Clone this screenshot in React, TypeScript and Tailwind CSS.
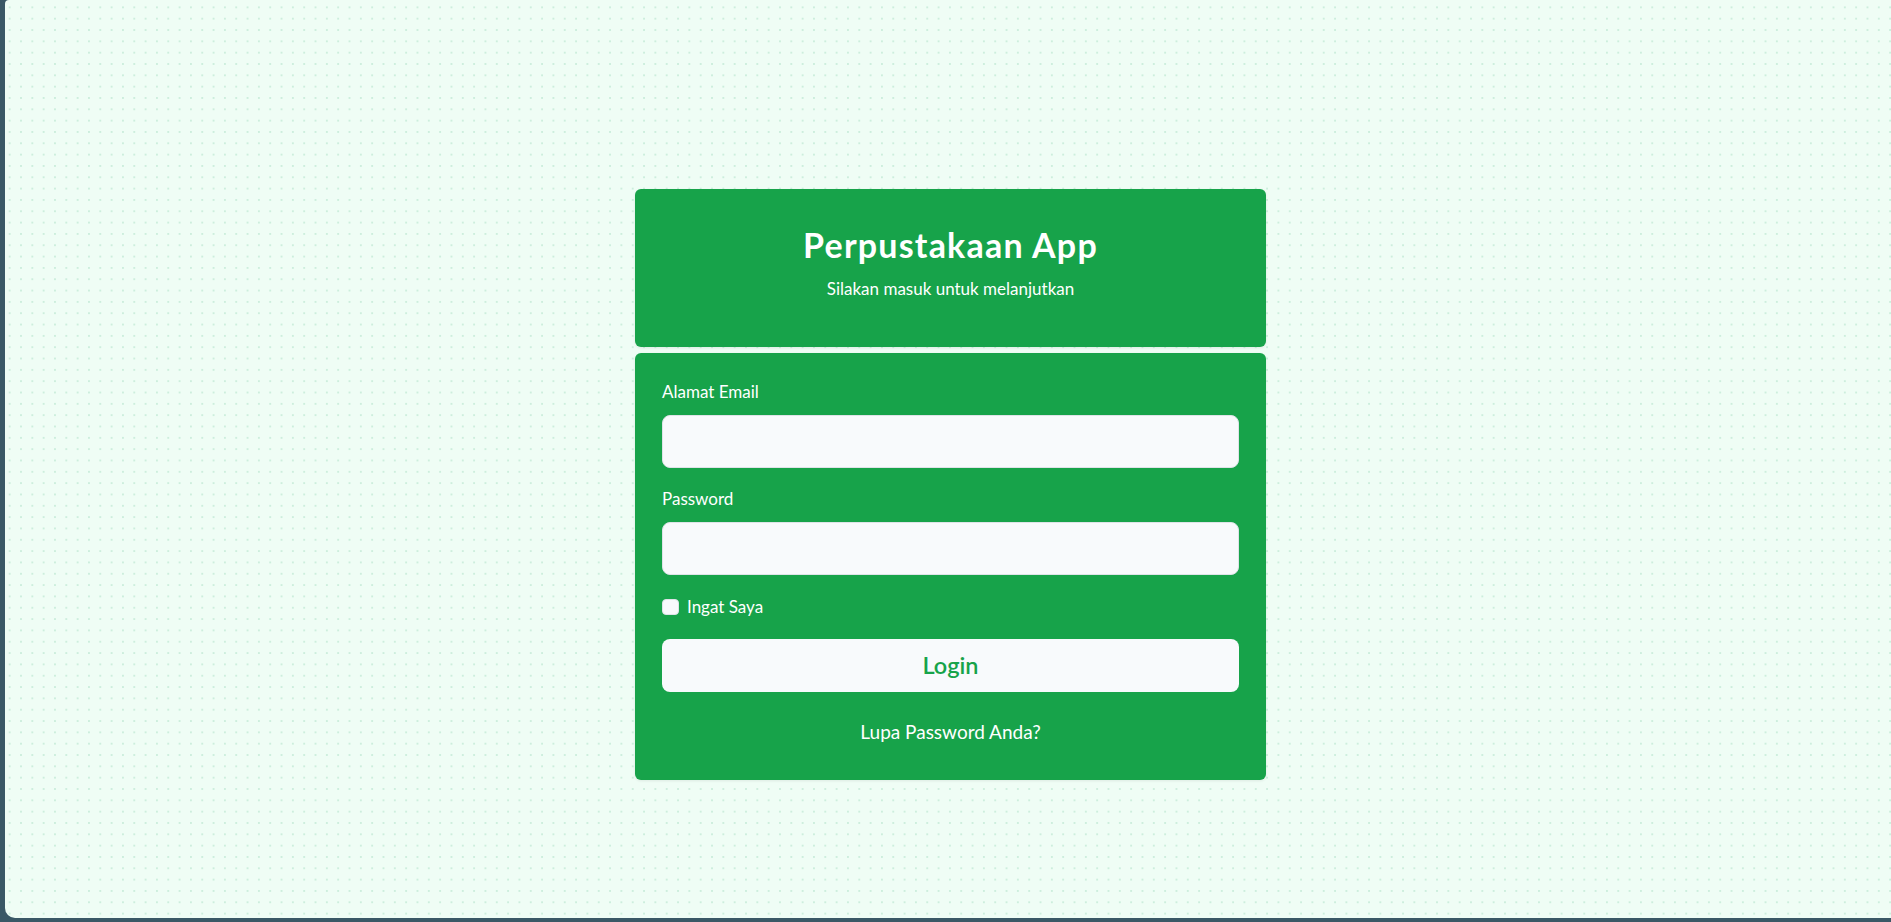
import React from "react";

export default function App() {
  return (
    <div
      className="h-[922px] w-full bg-[#3a5866] pl-[5px] pb-[4px]"
      style={{ fontFamily: "Lato, 'Noto Sans', 'Liberation Sans', sans-serif" }}
    >
      <div className="h-full w-full rounded-tl-[4px] rounded-bl-[10px] bg-[#effdf5] bg-[radial-gradient(circle,#cdeedd_0.9px,transparent_1.3px)] [background-size:11.33px_11.33px] [background-position:-1px_1.7px] flex justify-center pl-[5px] pt-[189px]">
        <div className="w-[631px] flex flex-col gap-[6px]">
          <div className="h-[158px] rounded-[6px] bg-[#17a34a] shadow-[0_1px_3px_rgba(0,0,0,0.08)] flex flex-col items-center pt-[37px] text-white">
            <h1 className="text-[34px] leading-[38px] font-bold tracking-[1.2px]">Perpustakaan App</h1>
            <p className="mt-[13px] text-[17px] leading-[24px]">Silakan masuk untuk melanjutkan</p>
          </div>
          <div className="rounded-[6px] bg-[#17a34a] shadow-[0_1px_3px_rgba(0,0,0,0.08)] px-[27px] pt-[27px] pb-[35px] text-white">
            <label className="block text-[17px] leading-[24px]">Alamat Email</label>
            <input
              type="email"
              className="mt-[11px] block h-[53px] w-full rounded-[8px] border border-[#dfe3e8] bg-[#f8fafc] px-3 text-gray-800 outline-none"
            />
            <label className="mt-[19px] block text-[17px] leading-[24px]">Password</label>
            <input
              type="password"
              className="mt-[11px] block h-[53px] w-full rounded-[8px] border border-[#dfe3e8] bg-[#f8fafc] px-3 text-gray-800 outline-none"
            />
            <div className="mt-[20px] flex h-[24px] items-center gap-[8px]">
              <span className="block h-[16px] w-[17px] rounded-[4px] border border-[#dfe3e8] bg-[#f8fafc]" />
              <span className="text-[17px] leading-[24px]">Ingat Saya</span>
            </div>
            <button className="mt-[20px] block h-[53px] w-full rounded-[8px] bg-[#f8fafc] text-[23.5px] font-semibold text-[#17a34a]">
              Login
            </button>
            <div className="mt-[26px] text-center text-[19px] leading-[27px]">Lupa Password Anda?</div>
          </div>
        </div>
      </div>
    </div>
  );
}
